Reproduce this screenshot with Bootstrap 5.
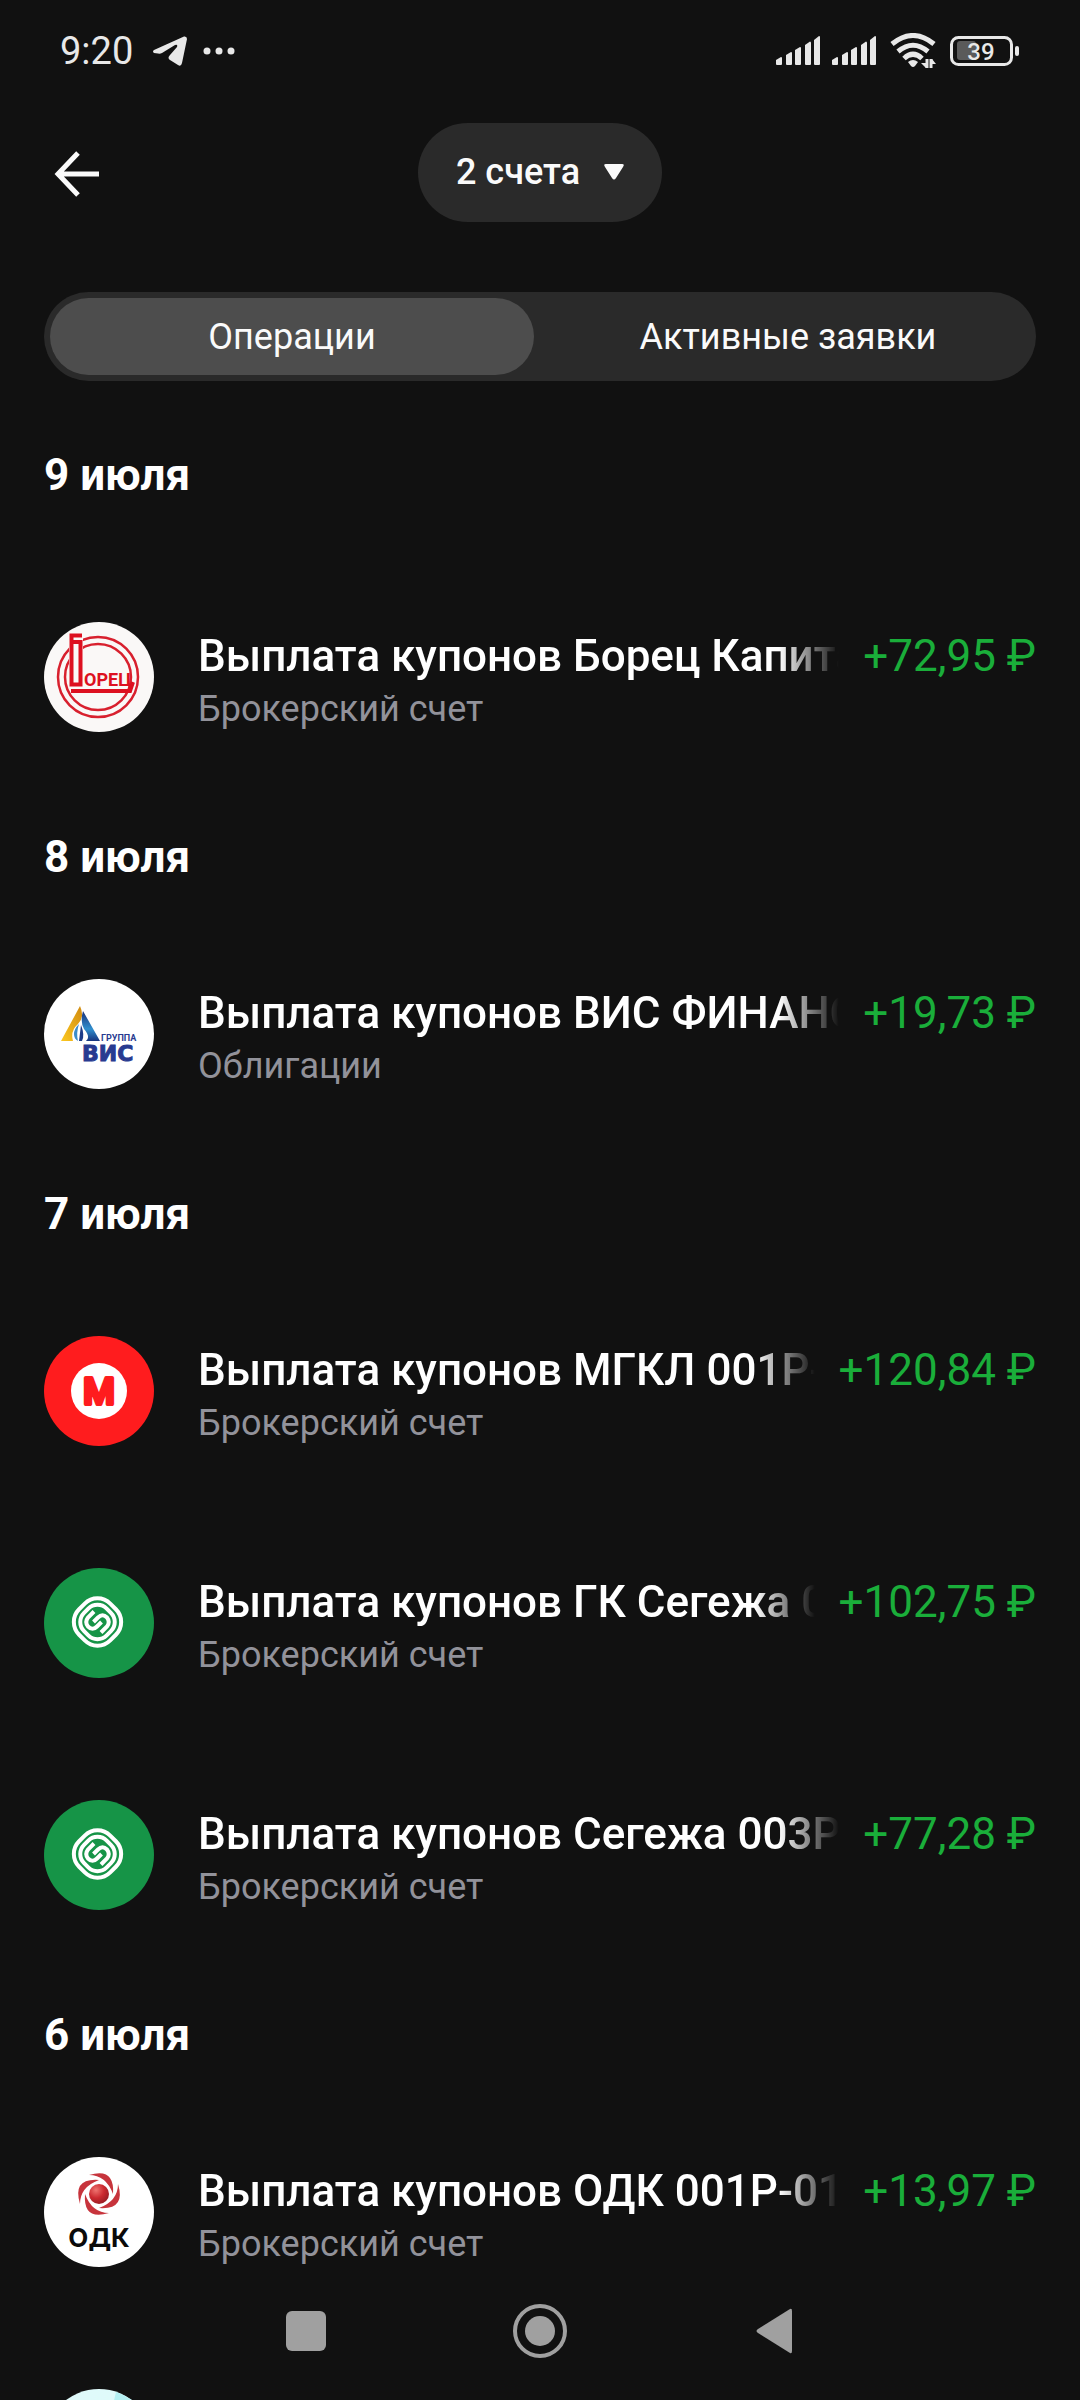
<!DOCTYPE html>
<html lang="ru">
<head>
    <meta charset="UTF-8">
    <meta name="viewport" content="width=device-width, initial-scale=1.0">
    <title>Операции</title>
    <link href="https://cdn.jsdelivr.net/npm/bootstrap@5.3.1/dist/css/bootstrap.min.css" rel="stylesheet">
    <style>
        body {
            font-family: Roboto, "Noto Sans", sans-serif;
            background-color: #111;
            color: #fff;
            font-size: 36px;
        }
        svg {
            display: block;
            flex-shrink: 0;
        }
        .status-bar {
            height: 102px;
            padding: 0 60px;
            color: #e8e8e8;
            font-size: 38px;
        }
        .status-icons {
            gap: 14px;
        }
        .top-bar {
            height: 140px;
            padding: 0 44px;
        }
        .top-side {
            flex: 1 1 0;
        }
        .back-btn {
            padding: 0 10px;
        }
        .accounts-btn {
            height: 99px;
            padding: 0 38px;
            gap: 24px;
            color: #fafafa;
            background-color: #2a2a2a;
            font-size: 36px;
            font-weight: 500;
        }
        .tabs-wrap {
            margin: 50px 44px 0;
            padding: 6px;
            gap: 12px;
            background-color: #2a2a2a;
        }
        .tabs-wrap .nav-link {
            height: 77px;
            padding: 0;
            border-radius: 50rem;
            color: #fafafa;
            font-size: 36px;
        }
        .tabs-wrap .nav-link.active {
            color: #fafafa;
            background-color: #4d4d4d;
        }
        .op-list {
            padding: 30px 44px 0;
            scrollbar-width: none;
        }
        .op-list::-webkit-scrollbar {
            display: none;
        }
        .op-date {
            height: 125px;
            margin: 0;
            padding-top: 4px;
            font-size: 44px;
            font-weight: 700;
        }
        .op-date-first {
            margin-bottom: 25px;
        }
        .op-row {
            height: 232px;
            gap: 44px;
        }
        .op-logo {
            width: 110px;
            height: 110px;
        }
        .op-title {
            font-size: 44px;
            line-height: 56px;
            font-weight: 500;
            -webkit-mask-image: linear-gradient(to left, transparent, #000 60px);
            mask-image: linear-gradient(to left, transparent, #000 60px);
        }
        .op-sum {
            font-size: 44px;
            line-height: 56px;
            color: #1aae3a;
        }
        .op-account {
            font-size: 36px;
            line-height: 50px;
            color: #92929a;
        }
        .system-nav {
            height: 138px;
        }
        .system-nav .btn {
            width: 234px;
        }
    </style>
</head>
<body>
    <div class="d-flex flex-column vh-100 overflow-hidden">
        <div class="status-bar d-flex flex-shrink-0 align-items-center justify-content-between">
            <div class="d-flex align-items-center">
                <span class="me-3">9:20</span>
                <svg class="ms-1 me-3" width="34" height="30" viewBox="0 0 34 30" fill="#e8e8e8">
                    <path d="M1 14 L31 .5 Q34 0 34 3 L29 27 Q28 31 25 29 L17 24 Q14 22 17 19 L24 11 Q25 8 22 9 L9 17 Q7 18 5 17.500 L1 17 Q-1 15.500 1 14z"/>
                </svg>
                <svg width="32" height="8" viewBox="0 0 32 8" fill="#e8e8e8">
                    <circle cx="4" cy="4" r="3.500"/><circle cx="16" cy="4" r="3.500"/><circle cx="28" cy="4" r="3.500"/>
                </svg>
            </div>
            <div class="status-icons d-flex align-items-center">
                <svg width="100" height="30" viewBox="0 0 100 30" fill="#e8e8e8">
                    <g id="signal">
                        <path d="M0 24 L5 21 Q6 21 6 22 V28 Q6 29 5 29 H1 Q0 29 0 28z"/>
                        <path d="M10 19 L15 16 Q16 16 16 17 V28 Q16 29 15 29 H11 Q10 29 10 28z"/>
                        <path d="M19 14 L24 11 Q25 11 25 12 V28 Q25 29 24 29 H20 Q19 29 19 28z"/>
                        <path d="M29 9 L34 5.500 Q35 5.500 35 7 V28 Q35 29 34 29 H30 Q29 29 29 28z"/>
                        <path d="M38 4 L43 0 Q44 0 44 1 V28 Q44 29 43 29 H39 Q38 29 38 28z"/>
                    </g>
                    <use href="#signal" x="56"/>
                </svg>
                <svg width="46" height="36" viewBox="0 0 46 36" fill="none" stroke="#e8e8e8" stroke-width="5">
                    <path d="M2 11 Q23 -6 44 11"/>
                    <path d="M8 18.500 Q23 6 38 18.500"/>
                    <path d="M14 25.500 Q23 17 32 25.500"/>
                    <path d="M18 29 Q23 25 28 29 L25 33 Q23 35 21 33z" fill="#e8e8e8" stroke="none"/>
                    <path d="M37 26 v9 M41 35 v-9" stroke-width="3"/>
                    <path d="M31 30 h5 v5z M42 26 l4 5 h-4z" fill="#e8e8e8" stroke="none"/>
                </svg>
                <svg width="70" height="30" viewBox="0 0 70 30">
                    <rect x="1.500" y="1.500" width="60" height="27" rx="7" fill="none" stroke="#e8e8e8" stroke-width="3"/>
                    <rect x="7" y="5" width="19" height="19" rx="3" fill="#5a5a5a"/>
                    <rect x="65" y="10" width="4" height="10" rx="2" fill="#e8e8e8"/>
                    <text x="31" y="24" text-anchor="middle" font-size="24" font-weight="500" fill="#e8e8e8">39</text>
                </svg>
            </div>
        </div>

        <header class="top-bar d-flex flex-shrink-0 align-items-center">
            <div class="top-side">
                <button class="btn back-btn border-0" type="button" aria-label="Назад">
                    <svg width="46" height="46" viewBox="0 0 46 46" fill="none" stroke="#fafafa" stroke-width="5">
                        <path d="M24 2 L4 23 L24 44 M4 23 H45"/>
                    </svg>
                </button>
            </div>
            <button class="btn accounts-btn rounded-pill border-0 d-flex align-items-center" type="button">
                2 счета
                <svg width="20" height="16" viewBox="0 0 20 16" fill="#fafafa">
                    <path d="M2 0 H18 Q21 0 19 3 L12 14 Q10 17 8 14 L1 3 Q-1 0 2 0z"/>
                </svg>
            </button>
            <div class="top-side"></div>
        </header>

        <div class="tabs-wrap nav nav-pills nav-fill flex-nowrap flex-shrink-0 rounded-pill" role="tablist">
            <button class="nav-link active w-50" type="button" role="tab" aria-selected="true">Операции</button>
            <button class="nav-link w-50" type="button" role="tab" aria-selected="false">Активные заявки</button>
        </div>

        <main class="op-list flex-fill overflow-auto">
            <h2 class="op-date op-date-first d-flex align-items-center">9 июля</h2>
            <div class="op-row d-flex align-items-center">
                <svg class="op-logo" viewBox="0 0 110 110">
                    <circle cx="55" cy="55" r="55" fill="#faf8f7"/>
                    <g fill="none" stroke="#d8202e" stroke-width="2.500">
                        <circle cx="54" cy="55" r="40"/>
                        <circle cx="54" cy="55" r="33"/>
                    </g>
                    <path d="M25 11 H39 V64 H25z" fill="#faf8f7"/>
                    <path d="M38 13.500 H27.500 V62.500 H36.500 V20 H28" fill="none" stroke="#dd1020" stroke-width="4"/>
                    <path d="M27 69 H86 L89 60" fill="none" stroke="#dd1020" stroke-width="4"/>
                    <text x="40" y="64" font-size="18" font-weight="700" fill="#dd1020">ОРЕЦ</text>
                </svg>
                <div class="flex-fill overflow-hidden pt-2">
                    <div class="d-flex gap-4">
                        <div class="op-title flex-fill overflow-hidden text-nowrap">Выплата купонов Борец Капита</div>
                        <div class="op-sum text-nowrap">+72,95 ₽</div>
                    </div>
                    <div class="op-account">Брокерский счет</div>
                </div>
            </div>

            <h2 class="op-date d-flex align-items-center">8 июля</h2>
            <div class="op-row d-flex align-items-center">
                <svg class="op-logo" viewBox="0 0 110 110">
                    <defs>
                        <linearGradient id="visGold" x1="1" y1="0" x2="0" y2="1">
                            <stop offset="0" stop-color="#d08a10"/><stop offset="1" stop-color="#fcc820"/>
                        </linearGradient>
                        <linearGradient id="visBlue" x1="0" y1="0" x2="0" y2="1">
                            <stop offset="0" stop-color="#1b2f78"/><stop offset=".6" stop-color="#2f8fce"/><stop offset="1" stop-color="#17347f"/>
                        </linearGradient>
                    </defs>
                    <circle cx="55" cy="55" r="55" fill="#fff"/>
                    <path d="M36 27 L17 62 H29 Q26 52 34 45 Q41 38 36 27z" fill="url(#visGold)"/>
                    <path d="M39 32 L56 62 H42 Q47 58 40 50 Q36 43 39 32z" fill="url(#visBlue)"/>
                    <path d="M35 45 Q30 50 30 55 Q30 60 34 62 Q32 54 35 45z" fill="#3c8cc8"/>
                    <path d="M37 46 Q41 56 38 62 H35z" fill="#1d3c88"/>
                    <text x="57" y="62" font-size="9" font-weight="700" fill="#283a90">ГРУППА</text>
                    <text x="38" y="82" font-family="DejaVu Sans, sans-serif" font-size="22" font-weight="700" fill="#283a90" stroke="#283a90">ВИС</text>
                </svg>
                <div class="flex-fill overflow-hidden pt-2">
                    <div class="d-flex gap-4">
                        <div class="op-title flex-fill overflow-hidden text-nowrap">Выплата купонов ВИС ФИНАНС</div>
                        <div class="op-sum text-nowrap">+19,73 ₽</div>
                    </div>
                    <div class="op-account">Облигации</div>
                </div>
            </div>

            <h2 class="op-date d-flex align-items-center">7 июля</h2>
            <div class="op-row d-flex align-items-center">
                <svg class="op-logo" viewBox="0 0 110 110">
                    <circle cx="55" cy="55" r="55" fill="#ff1c1e"/>
                    <circle cx="55" cy="55" r="28" fill="#fff"/>
                    <text x="55" y="68" text-anchor="middle" font-size="36" font-weight="500" fill="#ff1c1e" stroke="#ff1c1e" stroke-width="4" stroke-linejoin="round">M</text>
                </svg>
                <div class="flex-fill overflow-hidden pt-2">
                    <div class="d-flex gap-4">
                        <div class="op-title flex-fill overflow-hidden text-nowrap">Выплата купонов МГКЛ 001Р-</div>
                        <div class="op-sum text-nowrap">+120,84 ₽</div>
                    </div>
                    <div class="op-account">Брокерский счет</div>
                </div>
            </div>
            <div class="op-row d-flex align-items-center">
                <svg class="op-logo" viewBox="0 0 110 110">
                    <g id="segezha">
                        <circle cx="55" cy="55" r="55" fill="#169447"/>
                        <g fill="none" stroke="#fff" stroke-width="4">
                            <rect x="31.500" y="32" width="44" height="44" rx="18" transform="rotate(45 53.500 54)"/>
                            <rect x="37.500" y="38" width="32" height="32" rx="13" transform="rotate(45 53.500 54)"/>
                            <path id="hook" d="M50 43.500 L44 49.500 Q40.500 54 44 58.500 Q48.500 63 53 58.500 L57.500 54"/>
                            <use href="#hook" transform="rotate(180 53.500 54)"/>
                        </g>
                    </g>
                </svg>
                <div class="flex-fill overflow-hidden pt-2">
                    <div class="d-flex gap-4">
                        <div class="op-title flex-fill overflow-hidden text-nowrap">Выплата купонов ГК Сегежа 0</div>
                        <div class="op-sum text-nowrap">+102,75 ₽</div>
                    </div>
                    <div class="op-account">Брокерский счет</div>
                </div>
            </div>
            <div class="op-row d-flex align-items-center">
                <svg class="op-logo" viewBox="0 0 110 110">
                    <use href="#segezha"/>
                </svg>
                <div class="flex-fill overflow-hidden pt-2">
                    <div class="d-flex gap-4">
                        <div class="op-title flex-fill overflow-hidden text-nowrap">Выплата купонов Сегежа 003Р</div>
                        <div class="op-sum text-nowrap">+77,28 ₽</div>
                    </div>
                    <div class="op-account">Брокерский счет</div>
                </div>
            </div>

            <h2 class="op-date d-flex align-items-center">6 июля</h2>
            <div class="op-row d-flex align-items-center">
                <svg class="op-logo" viewBox="0 0 110 110">
                    <defs>
                        <radialGradient id="odkBall" cx=".35" cy=".3" r=".8">
                            <stop offset="0" stop-color="#ee7470"/><stop offset=".5" stop-color="#cc2a30"/><stop offset="1" stop-color="#8f1a22"/>
                        </radialGradient>
                    </defs>
                    <circle cx="55" cy="55" r="55" fill="#fff"/>
                    <circle cx="55" cy="37" r="10" fill="url(#odkBall)"/>
                    <g fill="#c7343c">
                        <path id="blade" d="M45 18 Q71 10 69 37 Q62 18 45 18z"/>
                        <use href="#blade" transform="rotate(90 55 37)"/>
                        <use href="#blade" transform="rotate(180 55 37)"/>
                        <use href="#blade" transform="rotate(270 55 37)"/>
                    </g>
                    <text x="55" y="90" text-anchor="middle" font-family="Inter, sans-serif" font-size="26" font-weight="700" fill="#0a0a0a">ОДК</text>
                </svg>
                <div class="flex-fill overflow-hidden pt-2">
                    <div class="d-flex gap-4">
                        <div class="op-title flex-fill overflow-hidden text-nowrap">Выплата купонов ОДК 001Р-01</div>
                        <div class="op-sum text-nowrap">+13,97 ₽</div>
                    </div>
                    <div class="op-account">Брокерский счет</div>
                </div>
            </div>
            <div class="op-row d-flex align-items-center">
                <svg class="op-logo" viewBox="0 0 110 110">
                    <circle cx="55" cy="55" r="55" fill="#dffafa"/>
                    <path d="M72 3 A55 55 0 0 1 110 55 H60z" fill="#b4f0f2"/>
                </svg>
            </div>
        </main>

        <nav class="system-nav fixed-bottom d-flex align-items-center justify-content-center">
            <button class="btn border-0 d-flex justify-content-center" type="button" aria-label="Недавние">
                <svg width="40" height="40" viewBox="0 0 40 40"><rect width="40" height="40" rx="6" fill="#a0a0a0"/></svg>
            </button>
            <button class="btn border-0 d-flex justify-content-center" type="button" aria-label="Домой">
                <svg width="54" height="54" viewBox="0 0 54 54">
                    <circle cx="27" cy="27" r="25" fill="none" stroke="#a0a0a0" stroke-width="4"/>
                    <circle cx="27" cy="27" r="15" fill="#a0a0a0"/>
                </svg>
            </button>
            <button class="btn border-0 d-flex justify-content-center" type="button" aria-label="Назад">
                <svg width="36" height="46" viewBox="0 0 36 46" fill="#a0a0a0">
                    <path d="M34 1 Q36 0 36 3 V43 Q36 46 34 45 L2 25 Q-1 23 2 21z"/>
                </svg>
            </button>
        </nav>
    </div>
    <script src="https://cdn.jsdelivr.net/npm/bootstrap@5.3.1/dist/js/bootstrap.bundle.min.js"></script>
</body>
</html>
